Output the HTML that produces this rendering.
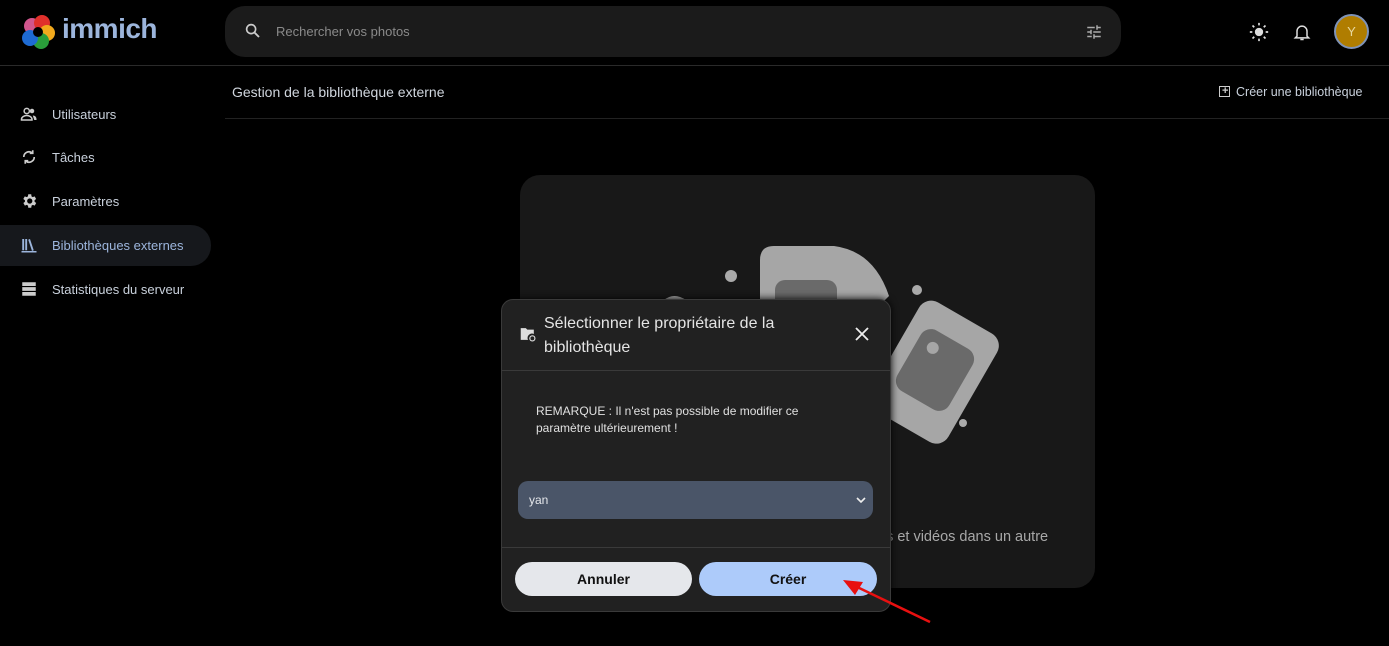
<!DOCTYPE html>
<html><head><meta charset="utf-8"><style>
*{box-sizing:border-box;margin:0;padding:0}
body{width:1389px;height:646px;background:#000;font-family:"Liberation Sans",sans-serif;position:relative;overflow:hidden;color:#ddd}
.abs{position:absolute}
.nav{position:absolute;left:0;height:40px;display:flex;align-items:center;font-size:13px;color:#c9d1dc}
.nav svg{position:absolute;left:20px}
.nav span{position:absolute;left:52px;white-space:nowrap}
</style></head><body>
<!-- logo -->
<svg class="abs" style="left:20px;top:14px" width="36" height="36" viewBox="0 0 36 36">
<circle cx="12" cy="12" r="8" fill="#d1568d"/><circle cx="22" cy="9" r="8" fill="#e0302b"/><circle cx="27" cy="19" r="8" fill="#f2a91c"/><circle cx="21" cy="27" r="8" fill="#2a9d3a"/><circle cx="10" cy="24" r="8" fill="#1e6bd3"/><circle cx="18" cy="18" r="5" fill="#000"/></svg>
<div class="abs" style="left:62px;top:13px;font-size:28px;font-weight:bold;color:#9cb5dc;letter-spacing:-0.5px">immich</div>
<!-- search -->
<div class="abs" style="left:225px;top:6px;width:896px;height:51px;background:#1b1b1b;border-radius:20px"></div>
<svg class="abs" style="left:244px;top:22px" width="18" height="18" viewBox="0 0 24 24"><circle cx="9.5" cy="9.5" r="6" stroke="#ccc" stroke-width="2.2" fill="none"/><path d="M14 14l6 6" stroke="#ccc" stroke-width="2.5"/></svg>
<div class="abs" style="left:276px;top:24px;font-size:13px;color:#8a8a8a">Rechercher vos photos</div>
<svg class="abs" style="left:1085px;top:23px" width="18" height="18" viewBox="0 0 24 24" fill="#aaa"><path d="M3 17v2h6v-2H3zM3 5v2h10V5H3zm10 16v-2h8v-2h-8v-2h-2v6h2zM7 9v2H3v2h4v2h2V9H7zm14 4v-2H11v2h10zm-6-4h2V7h4V5h-4V3h-2v6z"/></svg>
<svg class="abs" style="left:1249px;top:22px" width="20" height="20" viewBox="0 0 24 24" fill="#ddd"><circle cx="12" cy="12" r="5"/><g stroke="#ddd" stroke-width="2"><path d="M12 1v3M12 20v3M1 12h3M20 12h3M4.2 4.2l2.1 2.1M17.7 17.7l2.1 2.1M4.2 19.8l2.1-2.1M17.7 6.3l2.1-2.1"/></g></svg>
<svg class="abs" style="left:1292px;top:21px" width="20" height="22" viewBox="0 0 24 24" fill="none" stroke="#ddd" stroke-width="1.8"><path d="M6 17V11a6 6 0 0112 0v6l2 2H4z"/><path d="M10 21h4"/></svg>
<div class="abs" style="left:1334px;top:14px;width:35px;height:35px;border-radius:50%;background:#b07d00;border:2px solid #7f93b8;color:#e8d9a0;font-size:13px;text-align:center;line-height:31px">Y</div>
<div class="abs" style="left:0;top:65px;width:1389px;height:1px;background:#2a2a2a"></div>
<!-- sidebar -->
<div class="abs" style="left:0;top:225px;width:211px;height:41px;background:#16181c;border-radius:0 20px 20px 0"></div>
<div class="nav" style="top:94px"><svg width="18" height="18" viewBox="0 0 24 24" fill="#ccc"><circle cx="9" cy="8" r="3.5" fill="none" stroke="#ccc" stroke-width="2"/><path d="M2 19c0-3 4-5 7-5s7 2 7 5v1H2z" fill="none" stroke="#ccc" stroke-width="2"/><circle cx="16" cy="8" r="3"/><path d="M17 14c3 0 5 2 5 5v1h-3"/></svg><span>Utilisateurs</span></div>
<div class="nav" style="top:137px"><svg width="18" height="18" viewBox="0 0 24 24" fill="none" stroke="#ccc" stroke-width="2.2"><path d="M19 12a7 7 0 01-11.5 5.3M5 12a7 7 0 0111.5-5.3"/><path d="M17 3v4h-4M7 21v-4h4"/></svg><span>Tâches</span></div>
<div class="nav" style="top:181px"><svg width="18" height="18" viewBox="0 0 24 24" fill="#ccc"><path d="M19.4 13a7.5 7.5 0 000-2l2.1-1.6-2-3.5-2.5 1a7 7 0 00-1.7-1L15 3h-4l-.4 2.9a7 7 0 00-1.7 1l-2.5-1-2 3.5L6.6 11a7.5 7.5 0 000 2l-2.1 1.6 2 3.5 2.5-1a7 7 0 001.7 1L11 21h4l.4-2.9a7 7 0 001.7-1l2.5 1 2-3.5zM13 15.5a3.5 3.5 0 110-7 3.5 3.5 0 010 7z"/></svg><span>Paramètres</span></div>
<div class="nav" style="top:225px"><svg width="18" height="18" viewBox="0 0 24 24" fill="#9cb5dc"><rect x="3" y="4" width="2.5" height="15"/><rect x="7" y="4" width="2.5" height="15"/><path d="M11 5l2.3-1 5 15-2.3 1z"/><rect x="2" y="20" width="20" height="2"/></svg><span style="color:#9cb5dc">Bibliothèques externes</span></div>
<div class="nav" style="top:269px"><svg width="18" height="18" viewBox="0 0 24 24" fill="#ccc"><rect x="3" y="3" width="18" height="5"/><rect x="3" y="9.5" width="18" height="5"/><rect x="3" y="16" width="18" height="5"/></svg><span>Statistiques du serveur</span></div>
<!-- header -->
<div class="abs" style="left:232px;top:84px;font-size:14px;color:#d0d6de">Gestion de la bibliothèque externe</div>
<div class="abs" style="left:1219px;top:86px;width:11px;height:11px;border:1.5px solid #ccc"></div>
<div class="abs" style="left:1222px;top:85px;font-size:11px;color:#ccc;font-weight:bold">+</div>
<div class="abs" style="left:1236px;top:85px;font-size:12.5px;color:#c9d1dc">Créer une bibliothèque</div>
<div class="abs" style="left:225px;top:118px;width:1164px;height:1px;background:#222"></div>
<!-- card -->
<div class="abs" style="left:520px;top:175px;width:575px;height:413px;background:#181818;border-radius:20px"></div>
<svg class="abs" style="left:640px;top:240px" width="360" height="220" viewBox="640 240 360 220">
<circle cx="731" cy="276" r="6" fill="#aaa"/><circle cx="917" cy="290" r="5" fill="#aaa"/><circle cx="963" cy="423" r="4" fill="#aaa"/>
<path d="M760 260q0-14 14-14h60q40 5 55 50l-20 20h-109z" fill="#a6a6a6"/>
<rect x="775" y="280" width="62" height="40" rx="10" fill="#6a6a6a"/>
<g transform="rotate(30 935 370)"><rect x="890" y="310" width="90" height="125" rx="14" fill="#a6a6a6"/><rect x="905" y="335" width="60" height="70" rx="12" fill="#6a6a6a"/><circle cx="922" cy="352" r="6" fill="#a6a6a6"/></g>
<path d="M664 300q10-8 22 0z" fill="#aaa"/>
</svg>
<div class="abs" style="left:878px;top:529px;font-size:14.5px;color:#a8a8a8">os et vidéos dans un autre</div>
<!-- dialog -->
<div class="abs" style="left:501px;top:299px;width:390px;height:313px;background:#212121;border:1px solid #3a3a3a;border-radius:12px;box-shadow:0 0 8px #000"></div>
<svg class="abs" style="left:519px;top:326px" width="18" height="16" viewBox="0 0 24 22" fill="#ddd"><path d="M2 3h7l2 2h9v6a6 6 0 00-8 8H2z"/><circle cx="18" cy="17" r="3.5" fill="none" stroke="#ddd" stroke-width="1.6"/></svg>
<div class="abs" style="left:544px;top:312px;font-size:16px;line-height:24px;color:#e4e4e4;width:300px">Sélectionner le propriétaire de la bibliothèque</div>
<svg class="abs" style="left:855px;top:327px" width="14" height="14" viewBox="0 0 14 14" stroke="#eee" stroke-width="1.8"><path d="M1 1l12 12M13 1L1 13"/></svg>
<div class="abs" style="left:502px;top:370px;width:388px;height:1px;background:#3a3a3a"></div>
<div class="abs" style="left:536px;top:403px;font-size:12px;line-height:17px;color:#e0e0e0;width:320px">REMARQUE : Il n'est pas possible de modifier ce paramètre ultérieurement !</div>
<div class="abs" style="left:518px;top:481px;width:355px;height:38px;background:#4a5568;border-radius:10px"></div>
<div class="abs" style="left:529px;top:493px;font-size:12px;color:#e5e7eb">yan</div>
<svg class="abs" style="left:856px;top:496px" width="10" height="8" viewBox="0 0 10 8" fill="none" stroke="#eee" stroke-width="1.6"><path d="M1 2l4 4 4-4"/></svg>
<div class="abs" style="left:502px;top:547px;width:388px;height:1px;background:#3a3a3a"></div>
<div class="abs" style="left:515px;top:562px;width:177px;height:34px;background:#e5e7eb;border-radius:17px;color:#111;font-size:14px;font-weight:bold;text-align:center;line-height:34px">Annuler</div>
<div class="abs" style="left:699px;top:562px;width:178px;height:34px;background:#adcbfa;border-radius:17px;color:#111;font-size:14px;font-weight:bold;text-align:center;line-height:34px">Créer</div>
<!-- arrow -->
<svg class="abs" style="left:830px;top:570px" width="110" height="60" viewBox="830 570 110 60"><path d="M930 622L855 586" stroke="#e81010" stroke-width="2.5"/><path d="M843 580l20 2-8 13z" fill="#e81010"/></svg>
</body></html>
